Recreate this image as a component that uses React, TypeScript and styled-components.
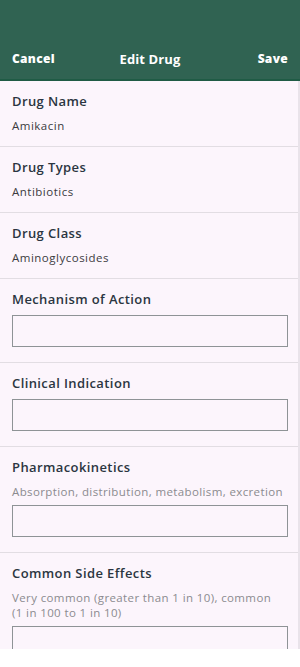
import React from 'react'
import styled, { createGlobalStyle } from 'styled-components'

const GlobalStyle = createGlobalStyle`
  html, body {
    margin: 0;
    padding: 0;
    background: #ffffff;
  }
  * {
    box-sizing: border-box;
  }
`

const FONT = `'Open Sans', 'Noto Sans', sans-serif`

const Screen = styled('div')`
  width: 300px;
  height: 667px;
  display: flex;
  flex-direction: column;
  font-family: ${FONT};
  background: #ffffff;
`

const Header = styled('header')`
  height: 81px;
  flex-shrink: 0;
  background: #306352;
  border-bottom: 2px solid #1f5b45;
  display: flex;
  align-items: flex-end;
  justify-content: space-between;
  padding: 0 12px 12px 12px;
  color: #ffffff;
`

const HeaderButton = styled('button')<{ $align?: string }>`
  background: none;
  border: none;
  padding: 0;
  color: #ffffff;
  font-family: ${FONT};
  font-weight: 800;
  font-size: 12px;
  letter-spacing: 0.3px;
  line-height: 16px;
  width: 50px;
  text-align: ${(p) => p.$align || 'left'};
`

const HeaderTitle = styled('h1')`
  margin: 0;
  font-size: 13px;
  line-height: 18px;
  font-weight: 700;
  letter-spacing: 0.1px;
  position: relative;
  top: 1px;
`

const Body = styled('main')`
  height: 568px;
  overflow: hidden;
  background: #fcf5fc;
  border-right: 2px solid #e9e3ea;
`

const Section = styled('section')`
  padding: 11px 10px 12px 12px;
  border-bottom: 1px solid #e2dde3;
  display: flex;
  flex-direction: column;
`

const Label = styled('h2')`
  margin: 0;
  font-size: 13px;
  line-height: 18px;
  font-weight: 600;
  letter-spacing: 0.4px;
  color: #2b3541;
`

const Value = styled('p')`
  margin: 8px 0 0 0;
  font-size: 11.5px;
  letter-spacing: 0.5px;
  line-height: 16px;
  color: #3b3b40;
`

const Hint = styled('p')`
  margin: 8px 0 0 0;
  font-size: 11.5px;
  letter-spacing: 0.38px;
  line-height: 15px;
  color: #8b8b8f;
`

const Field = styled('input')`
  margin: 7px 0 3px 0;
  width: 100%;
  height: 32px;
  border: 1px solid #8e9396;
  background: #fcf5fc;
  border-radius: 0;
  font-family: ${FONT};
  font-size: 11px;
  padding: 0 8px;
  outline: none;

  ${Hint} + & {
    margin-top: 6px;
  }
`

type Item = {
  label: string
  value?: string
  hint?: string
}

const items: Item[] = [
  { label: 'Drug Name', value: 'Amikacin' },
  { label: 'Drug Types', value: 'Antibiotics' },
  { label: 'Drug Class', value: 'Aminoglycosides' },
  { label: 'Mechanism of Action' },
  { label: 'Clinical Indication' },
  {
    label: 'Pharmacokinetics',
    hint: 'Absorption, distribution, metabolism, excretion',
  },
  {
    label: 'Common Side Effects',
    hint: 'Very common (greater than 1 in 10), common (1\u00a0in 100 to 1 in 10)',
  },
]

export default function App() {
  return (
    <Screen>
      <GlobalStyle />
      <Header>
        <HeaderButton>Cancel</HeaderButton>
        <HeaderTitle>Edit Drug</HeaderTitle>
        <HeaderButton $align="right">Save</HeaderButton>
      </Header>
      <Body>
        {items.map((item) => (
          <Section key={item.label}>
            <Label>{item.label}</Label>
            {item.value ? (
              <Value>{item.value}</Value>
            ) : (
              <>
                {item.hint && <Hint>{item.hint}</Hint>}
                <Field />
              </>
            )}
          </Section>
        ))}
      </Body>
    </Screen>
  )
}
